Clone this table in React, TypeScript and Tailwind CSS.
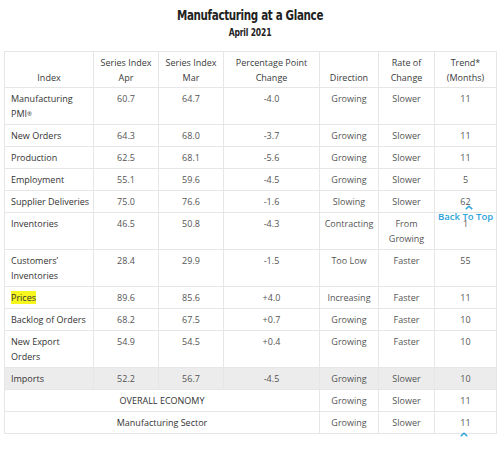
import React from "react";

type Row = {
  name: React.ReactNode;
  apr: string;
  mar: string;
  change: string;
  dir: string;
  rate: React.ReactNode;
  trend: string;
  shaded?: boolean;
};

const rows: Row[] = [
  {
    name: (
      <>
        Manufacturing
        <br />
        PMI<sup className="text-[6px] relative -top-[1px]">®</sup>
      </>
    ),
    apr: "60.7",
    mar: "64.7",
    change: "-4.0",
    dir: "Growing",
    rate: "Slower",
    trend: "11",
  },
  { name: "New Orders", apr: "64.3", mar: "68.0", change: "-3.7", dir: "Growing", rate: "Slower", trend: "11" },
  { name: "Production", apr: "62.5", mar: "68.1", change: "-5.6", dir: "Growing", rate: "Slower", trend: "11" },
  { name: "Employment", apr: "55.1", mar: "59.6", change: "-4.5", dir: "Growing", rate: "Slower", trend: "5" },
  { name: "Supplier Deliveries", apr: "75.0", mar: "76.6", change: "-1.6", dir: "Slowing", rate: "Slower", trend: "62" },
  {
    name: "Inventories",
    apr: "46.5",
    mar: "50.8",
    change: "-4.3",
    dir: "Contracting",
    rate: (
      <>
        From
        <br />
        Growing
      </>
    ),
    trend: "1",
  },
  {
    name: (
      <>
        Customers’
        <br />
        Inventories
      </>
    ),
    apr: "28.4",
    mar: "29.9",
    change: "-1.5",
    dir: "Too Low",
    rate: "Faster",
    trend: "55",
  },
  {
    name: <span className="bg-[#f7f71f]">Prices</span>,
    apr: "89.6",
    mar: "85.6",
    change: "+4.0",
    dir: "Increasing",
    rate: "Faster",
    trend: "11",
  },
  { name: "Backlog of Orders", apr: "68.2", mar: "67.5", change: "+0.7", dir: "Growing", rate: "Faster", trend: "10" },
  {
    name: (
      <>
        New Export
        <br />
        Orders
      </>
    ),
    apr: "54.9",
    mar: "54.5",
    change: "+0.4",
    dir: "Growing",
    rate: "Faster",
    trend: "10",
  },
  { name: "Imports", apr: "52.2", mar: "56.7", change: "-4.5", dir: "Growing", rate: "Slower", trend: "10", shaded: true },
];

const td = "border border-[#e6e6e6] px-[3px] pt-[3px] pb-[3px] align-top text-center text-[#555] whitespace-nowrap";
const th = "border border-[#e6e6e6] px-[3px] pt-[3px] pb-[2px] align-bottom text-center font-normal text-[#3a3a3a] whitespace-nowrap";

function Chevron({ className }: { className: string }) {
  return (
    <svg viewBox="0 0 10 6" className={className} fill="none" stroke="#2ea3dc" strokeWidth="1.8">
      <path d="M1 5 L5 1.5 L9 5" />
    </svg>
  );
}

export default function App() {
  return (
    <div className="relative w-[500px] h-[476px] bg-white overflow-hidden">
      <div className="pt-[6px] text-center font-['DejaVu_Sans',sans-serif] font-stretch-condensed font-bold text-[#222]">
        <h1 className="text-[14px] leading-[18px] tracking-[-0.4px] scale-x-[0.82]">Manufacturing at a Glance</h1>
        <p className="text-[10px] leading-[13px] mt-[2px] tracking-[-0.2px] scale-x-[0.85]">April 2021</p>
      </div>

      <div className="px-[4px] mt-[12px]">
        <table className="w-[492px] table-fixed border-collapse font-['Open_Sans',sans-serif] text-[9px] leading-[15px]">
          <colgroup>
            <col className="w-[89px]" />
            <col className="w-[65px]" />
            <col className="w-[65px]" />
            <col className="w-[96px]" />
            <col className="w-[59px]" />
            <col className="w-[56px]" />
            <col className="w-[62px]" />
          </colgroup>
          <thead>
            <tr>
              <th className={th}>Index</th>
              <th className={th}>
                Series Index
                <br />
                Apr
              </th>
              <th className={th}>
                Series Index
                <br />
                Mar
              </th>
              <th className={th}>
                Percentage Point
                <br />
                Change
              </th>
              <th className={th}>Direction</th>
              <th className={th}>
                Rate of
                <br />
                Change
              </th>
              <th className={th}>
                Trend*
                <br />
                (Months)
              </th>
            </tr>
          </thead>
          <tbody>
            {rows.map((r, i) => (
              <tr key={i} className={r.shaded ? "bg-[#ececec]" : ""}>
                <td className={`${td} !text-left !text-[#333] !pl-[6px]`}>{r.name}</td>
                <td className={td}>{r.apr}</td>
                <td className={td}>{r.mar}</td>
                <td className={td}>{r.change}</td>
                <td className={td}>{r.dir}</td>
                <td className={td}>{r.rate}</td>
                <td className={td}>{r.trend}</td>
              </tr>
            ))}
            <tr>
              <td colSpan={4} className={`${td} !text-[#333]`}>OVERALL ECONOMY</td>
              <td className={td}>Growing</td>
              <td className={td}>Slower</td>
              <td className={td}>11</td>
            </tr>
            <tr>
              <td colSpan={4} className={`${td} !text-[#333]`}>Manufacturing Sector</td>
              <td className={td}>Growing</td>
              <td className={td}>Slower</td>
              <td className={td}>11</td>
            </tr>
          </tbody>
        </table>
      </div>

      {/* back to top overlay */}
      <div className="absolute left-[438px] top-[205px] flex flex-col items-center">
        <Chevron className="w-[8px] h-[5px] ml-[6px]" />
        <span className="font-['Open_Sans',sans-serif] text-[9.5px] leading-[12px] font-semibold text-[#2ea3dc] mt-[1px]">
          Back To Top
        </span>
      </div>
      <Chevron className="absolute left-[460px] top-[432px] w-[8px] h-[5px]" />
    </div>
  );
}
